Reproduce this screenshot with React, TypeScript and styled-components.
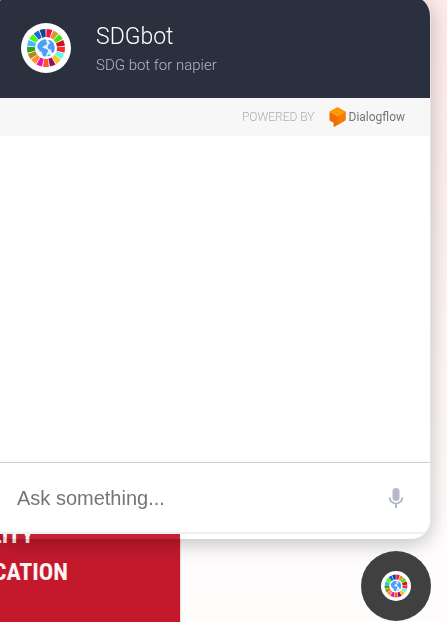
import React from "react";
import styled, { createGlobalStyle } from "styled-components";

const GlobalStyle = createGlobalStyle`
  *, *::before, *::after { box-sizing: border-box; }
  body { margin: 0; font-family: Roboto, "Liberation Sans", sans-serif; }
`;

const Page = styled.main`
  display: flex;
  flex-direction: column;
  justify-content: flex-end;
  min-height: 100vh;
  overflow: hidden;
  background: linear-gradient(to bottom, #fdeae9 0%, #fdeeec 25%, #fdf7f6 60%, #fefcfc 85%, #fefdfc 100%);
`;

const GoalTile = styled.section`
  width: 181px;
  height: 122px;
  padding-top: 17px;
  background: #c4192d;
  border-right: 1px solid #ecdcdc;
`;

const GoalTitle = styled.h2`
  display: flex;
  flex-direction: column;
  align-items: flex-end;
  width: 68px;
  margin: 0;
  color: #fdf3f2;
  font: 700 24px/37px "Roboto Condensed", "Liberation Sans Narrow", "Liberation Sans", sans-serif;
  white-space: nowrap;
`;

const TitleLine = styled.span<{ $inset?: number }>`
  padding-right: ${(p) => p.$inset ?? 0}px;
`;

const Chat = styled.section`
  position: fixed;
  top: -4px;
  right: 16px;
  bottom: 83px;
  left: -7px;
  display: flex;
  flex-direction: column;
  padding-bottom: 5px;
  border-radius: 20px;
  border-right: 1px solid #e9e4e4;
  overflow: hidden;
  background: linear-gradient(to right, rgba(255, 255, 255, 0.04) 187px, rgba(255, 255, 255, 0.9) 187px);
  box-shadow: 0 5px 20px rgba(0, 0, 0, 0.24);
`;

const Header = styled.header`
  display: flex;
  align-items: center;
  flex: none;
  gap: 25px;
  height: 102px;
  padding: 2px 28px 0;
  background: #2b303f;
`;

const Names = styled.div`
  display: flex;
  flex-direction: column;
  gap: 3px;
  padding-top: 3px;
`;

const BotName = styled.h1`
  margin: 0;
  color: #fff;
  font: 300 23px/28px Roboto, sans-serif;
`;

const BotNote = styled.p`
  margin: 0;
  color: #b3b7c3;
  font: 300 15px/22px Roboto, sans-serif;
`;

const PoweredBar = styled.div`
  display: flex;
  align-items: center;
  justify-content: flex-end;
  flex: none;
  gap: 14px;
  height: 38px;
  padding-right: 25px;
  background: #f7f7f7;
  color: #a9afb6;
  font: 300 12px/18px Roboto, sans-serif;
`;

const Brand = styled.a`
  display: flex;
  align-items: center;
  gap: 3px;
  color: #757575;
  font: 400 12px/20px Roboto, sans-serif;
  text-decoration: none;
`;

const Messages = styled.div`
  flex: 1;
  background: #fff;
`;

const AskForm = styled.form`
  display: flex;
  align-items: center;
  flex: none;
  height: 72px;
  padding: 0 22px 0 24px;
  border-top: 1px solid #cdcdcd;
  border-bottom: 2px solid #efefef;
  background: #fff;
`;

const AskInput = styled.input`
  flex: 1;
  min-width: 0;
  height: 48px;
  padding: 2px 0 0;
  border: 0;
  outline: 0;
  background: transparent;
  color: #333;
  font: 400 20px/24px "Liberation Sans", Arial, sans-serif;
  &::placeholder { color: #757575; opacity: 1; }
`;

const MicButton = styled.button`
  display: flex;
  padding: 0;
  border: 0;
  background: transparent;
  color: #b4bac4;
  cursor: pointer;
`;

const Launcher = styled.button`
  position: fixed;
  right: 16px;
  bottom: 1px;
  display: flex;
  align-items: center;
  justify-content: center;
  width: 70px;
  height: 70px;
  padding: 0;
  border: 0;
  border-radius: 50%;
  background: #404040;
  cursor: pointer;
`;

const WHEEL = [
  "#f5124b", "#d79b2b", "#46e312", "#cf1127", "#fb2a2e", "#5bfbee",
  "#fbc51d", "#980c62", "#fb5a28", "#f50cb0", "#fb922b", "#b8871c",
  "#32a320", "#45b7fb", "#4dfb10", "#1668d8", "#164484",
];

function polar(radius: number, degrees: number) {
  const a = (degrees * Math.PI) / 180;
  return `${(25 + radius * Math.sin(a)).toFixed(2)} ${(25 - radius * Math.cos(a)).toFixed(2)}`;
}

function SdgLogo({ size }: { size: number }) {
  const step = 360 / WHEEL.length;
  return (
    <svg width={size} height={size} viewBox="0 0 50 50" aria-hidden="true">
      <circle cx="25" cy="25" r="25" fill="#fff" />
      {WHEEL.map((color, i) => {
        const from = i * step + 1.5;
        const to = (i + 1) * step - 1.5;
        return (
          <path
            key={color}
            fill={color}
            d={`M${polar(11, from)}L${polar(19, from)}A19 19 0 0 1 ${polar(19, to)}L${polar(11, to)}A11 11 0 0 0 ${polar(11, from)}Z`}
          />
        );
      })}
      <circle cx="25" cy="25" r="8.500" fill="#e4f1fe" />
      <path
        fill="#499ff8"
        d="M16.500 21.500l3-3.500 4-1.700 2 .7-.5 2 1.500 1-1.500 2-2.500 1-1 2 3 .5 3 2-1.500 2.500-1 2.500-1 1.500-2-1-1-3.500-2.500-2-2-2.500zM27 17l3 .5 2.500 2.500 1.200 4-.2 3.500-1.500 2.500-1.500-1-.5-2.500-2.500-.5-1-2.500 1.500-2.500 1.500-1-1.500-1.500zM26.500 32l2.500-.5.500 1-3 1z"
      />
    </svg>
  );
}

function DialogflowMark() {
  return (
    <svg width="17" height="20" viewBox="0 0 17 20" aria-hidden="true">
      <path fill="#ef6c00" d="M.5 4.500 8.500 9l8-4.500v8.200a1 1 0 0 1-.5.8L5.500 19.800c-.5.300-.9 0-.9-.5v-3.500L1 13.700a1 1 0 0 1-.5-.9z" />
      <path fill="#f57c00" d="M8.500 9l8-4.500v8.200a1 1 0 0 1-.5.800L8.500 18z" />
      <path fill="#ff9800" d="M.5 4.500 8 .3a1 1 0 0 1 1 0l7.500 4.200L8.500 9z" />
    </svg>
  );
}

function MicIcon() {
  return (
    <svg width="24" height="24" viewBox="0 0 24 24" fill="currentColor" aria-hidden="true">
      <rect x="8.500" y="2" width="7" height="13" rx="3.500" />
      <path d="M17.300 11.500c0 3-2.540 5.100-5.300 5.100s-5.300-2.100-5.300-5.100H4.700c0 3.410 2.720 6.230 6.300 6.720V22h2v-3.780c3.580-.48 6.300-3.300 6.300-6.720z" />
    </svg>
  );
}

export default function App() {
  return (
    <>
      <GlobalStyle />
      <Page>
        <GoalTile>
          <GoalTitle>
            <TitleLine $inset={34}>LITY</TitleLine>
            <TitleLine>CATION</TitleLine>
          </GoalTitle>
        </GoalTile>
        <Chat aria-label="SDGbot chat">
          <Header>
            <SdgLogo size={50} />
            <Names>
              <BotName>SDGbot</BotName>
              <BotNote>SDG bot for napier</BotNote>
            </Names>
          </Header>
          <PoweredBar>
            <span>POWERED BY</span>
            <Brand href="#dialogflow">
              <DialogflowMark />
              Dialogflow
            </Brand>
          </PoweredBar>
          <Messages role="log" />
          <AskForm onSubmit={(e: React.FormEvent) => e.preventDefault()}>
            <AskInput type="text" aria-label="Ask something" placeholder="Ask something..." />
            <MicButton type="button" aria-label="Speak">
              <MicIcon />
            </MicButton>
          </AskForm>
        </Chat>
        <Launcher type="button" aria-label="Toggle chat">
          <SdgLogo size={30} />
        </Launcher>
      </Page>
    </>
  );
}
